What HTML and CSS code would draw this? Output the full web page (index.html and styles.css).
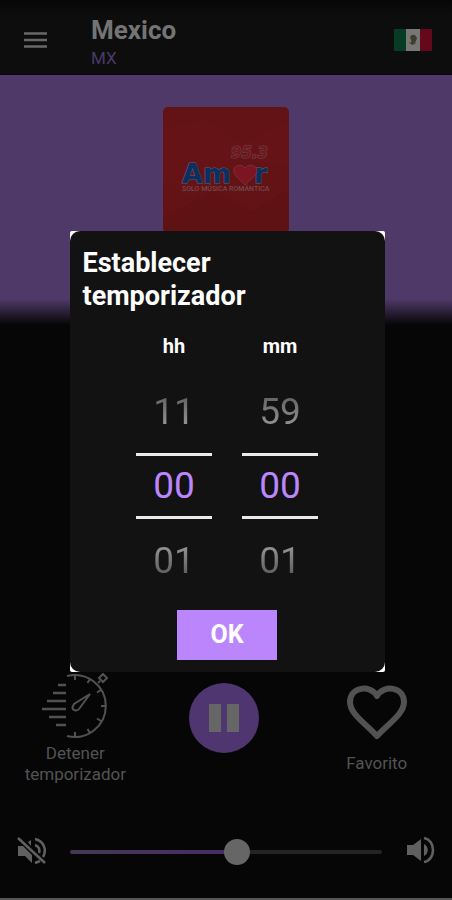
FILE: index.html
```html
<!DOCTYPE html>
<html lang="es">
<head>
<meta charset="utf-8">
<meta name="viewport" content="width=device-width, initial-scale=1">
<title>Radio Mexico</title>
<link rel="stylesheet" href="styles.css">
</head>
<body>
<div class="app">
  <header class="topbar">
    <button class="icon-button" type="button" aria-label="Menú">
      <svg width="24" height="18" viewBox="0 0 24 18"><path d="M0 2.500h23M0 9h23M0 15.500h23" stroke="currentColor" stroke-width="2.600"/></svg>
    </button>
    <div class="heading">
      <h1 class="country">Mexico</h1>
      <p class="code">MX</p>
    </div>
    <svg class="flag" width="38" height="22" viewBox="0 0 38 22" role="img" aria-label="México">
      <path fill="#063b25" d="M0 0h13v22H0z"/>
      <path fill="#777775" d="M12 0h14v22H12z"/>
      <path fill="#650819" d="M26 0h12v22H26z"/>
      <path fill="#403c32" d="M16 8q1-3 5-2l2 3-1 3-2 3q-2 1.500-4-.5l1.500-2z"/>
      <path d="M15 13q2 4 7 1" fill="none" stroke="#4c5140"/>
    </svg>
  </header>
  <main class="main">
    <section class="hero">
      <svg class="cover" width="126" height="126" viewBox="0 0 126 126" role="img" aria-label="Amor 95.3">
        <rect width="126" height="126" rx="5" fill="#631316"/>
        <path d="M0 22L42 12 80 36 126 14V60L70 50 30 92 0 74z" fill="#6a1417" opacity=".35"/>
        <path d="M0 110L50 84 90 104 126 82V121a5 5 0 0 1-5 5H5a5 5 0 0 1-5-5z" fill="#56100f" opacity=".3"/>
        <text class="freq" x="68" y="51">95.3</text>
        <text class="brand" x="19" y="76">Am</text>
        <text class="brand" x="91" y="76">r</text>
        <path d="M82 61c-3-5-13-3-11 4 1 5 7 8 11 13 4-5 12-9 12-14 0-6-9-8-12-3z" fill="#7d1422" stroke="#6f4a50" stroke-width=".6"/>
        <text class="tagline" x="19" y="84">SOLO MÚSICA ROMÁNTICA</text>
      </svg>
    </section>
    <section class="controls">
      <button class="action" type="button">
        <svg width="68" height="66" viewBox="0 0 68 66" fill="none" stroke="currentColor" stroke-width="2">
          <path d="M26 3a31 31 0 1 1 0 60"/>
          <path d="M17 12h8M12 20h13M6 28h19M1 36h24M8 44h17M15 52h10" stroke-width="2.600"/>
          <path d="M34 2v5M49 6l-2.500 4M60 17l-4 2.500M65 33h-5M60 48l-4-2.500M49 60l-2.500-4M34 64v-5"/>
          <path d="M49 21L38 36c-2 2.500-7 1.500-6.500-2L33 31z"/>
          <path d="M57 10l2-2M58 5l4-4 4 4-4 4z"/>
        </svg>
        <span>Detener temporizador</span>
      </button>
      <button class="play" type="button" aria-label="Pausa">
        <svg width="32" height="28" viewBox="0 0 32 28" fill="currentColor"><path d="M1 0h12v28H1zM19 0h12v28H19z"/></svg>
      </button>
      <button class="action" type="button">
        <svg width="60" height="64" viewBox="0 0 60 64" fill="none" stroke="currentColor" stroke-width="6" stroke-linejoin="round"><path d="M30 51C18 38 3 29 3 17 3 2 23-1 30 11 37-1 57 2 57 17c0 12-15 21-27 34z"/></svg>
        <span>Favorito</span>
      </button>
    </section>
    <section class="volume">
      <svg width="30" height="30" viewBox="0 0 30 30" fill="none" stroke="currentColor" stroke-width="2.600">
        <path d="M2 9h5l9 9v8l-7-7H2z" fill="currentColor" stroke="none"/>
        <path d="M12 5l3-2v6z" fill="currentColor" stroke="none"/>
        <path d="M2 1l27 25"/>
        <path d="M19 2c9 2 12 11 8 18M19 8c4 1 5 5 4 8M19 26l5-2"/>
      </svg>
      <input class="slider" type="range" min="0" max="100" value="54" aria-label="Volumen">
      <svg width="30" height="30" viewBox="0 0 30 30" fill="none" stroke="currentColor" stroke-width="2.600">
        <path d="M1 8h6l8-6v22l-8-6H1z" fill="currentColor" stroke="none"/>
        <path d="M18 7c5 2 5 10 0 12z" fill="currentColor" stroke="none"/>
        <path d="M18 1c12 2 12 22 0 24"/>
      </svg>
    </section>
  </main>
</div>
<div class="overlay">
  <div class="dialog-frame" role="dialog" aria-modal="true" aria-labelledby="timer-title">
    <form class="dialog">
      <h2 class="title" id="timer-title">Establecer temporizador</h2>
      <div class="pickers">
        <div class="picker">
          <label class="unit" for="hours">hh</label>
          <button class="step before" type="button">11</button>
          <input class="value" id="hours" type="text" inputmode="numeric" value="00">
          <button class="step after" type="button">01</button>
        </div>
        <div class="picker">
          <label class="unit" for="minutes">mm</label>
          <button class="step before" type="button">59</button>
          <input class="value" id="minutes" type="text" inputmode="numeric" value="00">
          <button class="step after" type="button">01</button>
        </div>
      </div>
      <button class="confirm" type="button">OK</button>
    </form>
  </div>
</div>
</body>
</html>
```
FILE: styles.css
```css
* {
  box-sizing: border-box;
}

body {
  margin: 0;
  background: #060606;
  color: #535353;
  font-family: Roboto, "Liberation Sans", sans-serif;
}

h1,
h2,
p {
  margin: 0;
}

button,
input {
  margin: 0;
  padding: 0;
  border: 0;
  background: none;
  color: inherit;
  font: inherit;
}

svg {
  display: block;
  flex: none;
}

.app {
  display: flex;
  flex-direction: column;
  min-height: 100vh;
  border-bottom: 2px solid #555;
}

.topbar {
  display: flex;
  align-items: center;
  height: 75px;
  padding: 10px 20px 4px 24px;
  background: linear-gradient(#070707, #0d0d0d 16px);
  border-bottom: 1px solid #090510;
}

.icon-button {
  width: 67px;
  color: #686868;
}

.heading {
  flex: 1;
  padding-top: 4px;
}

.country {
  color: #747474;
  font-size: 26px;
  line-height: 32px;
}

.code {
  color: #49396a;
  font-size: 17px;
  line-height: 24px;
}

.main {
  display: flex;
  flex: 1;
  flex-direction: column;
}

.hero {
  display: flex;
  justify-content: center;
  height: 250px;
  padding-top: 32px;
  background: linear-gradient(#4f3968 224px, #060606);
}

.brand {
  fill: #0b2f60;
  stroke: #5d6070;
  stroke-width: 1px;
  paint-order: stroke;
  font: 700 27px "DejaVu Sans", sans-serif;
}

.freq {
  fill: #6f1820;
  stroke: #6b4a4e;
  stroke-width: 1px;
  paint-order: stroke;
  font: italic 700 15px "DejaVu Sans", sans-serif;
}

.tagline {
  fill: #76484a;
  font: 500 7px Roboto, sans-serif;
}

.controls {
  display: grid;
  grid-template-columns: repeat(3, 1fr);
  align-items: center;
  justify-items: center;
  margin-top: auto;
}

.action {
  display: flex;
  flex-direction: column;
  align-items: center;
  gap: 4px;
  font-size: 17px;
  line-height: 21px;
}

.action svg {
  color: #525252;
}

.play {
  display: grid;
  place-items: center;
  width: 70px;
  height: 70px;
  margin: 0 4px 22px 0;
  border-radius: 50%;
  background: #4f3670;
  color: #666;
}

.volume {
  display: flex;
  align-items: center;
  gap: 24px;
  padding: 52px 16px 31px;
  color: #606060;
}

.slider {
  flex: 1;
  min-width: 0;
  height: 28px;
  appearance: none;
}

.slider::-webkit-slider-runnable-track {
  height: 4px;
  border-radius: 2px;
  background: linear-gradient(90deg, #443852, #482c66 54%, #242424 54%);
}

.slider::-webkit-slider-thumb {
  width: 26px;
  height: 26px;
  margin-top: -11px;
  border-radius: 50%;
  background: #666;
  appearance: none;
}

.overlay {
  position: fixed;
  inset: 0;
  display: grid;
  place-items: center;
  padding: 2px 0 0 2px;
}

.dialog-frame {
  width: 70%;
  border-radius: 2px;
  background: #fff;
}

.dialog {
  display: flex;
  flex-direction: column;
  align-items: center;
  padding: 16px 13px 12px;
  border-radius: 10px;
  background: #121212;
  color: #fff;
}

.title {
  align-self: stretch;
  font-size: 27px;
  line-height: 33px;
}

.pickers {
  display: flex;
  gap: 30px;
  margin: 21px 0 8px;
}

.picker {
  display: flex;
  flex-direction: column;
  align-items: center;
  width: 76px;
}

.unit {
  font-size: 20px;
  font-weight: 700;
  line-height: 24px;
}

.step,
.value {
  width: 100%;
  font-size: 37px;
  text-align: center;
}

.step {
  height: 83px;
  line-height: 83px;
  background-clip: text;
  color: transparent;
}

.before {
  margin-top: 12px;
  background-image: linear-gradient(#606060 30%, #989898 70%);
}

.after {
  background-image: linear-gradient(#989898 30%, #585858 70%);
}

.value {
  height: 66px;
  border: solid #ece8ee;
  border-width: 3px 0;
  color: #bb86fc;
}

.confirm {
  width: 100px;
  height: 50px;
  background: #bb86fc;
  font-size: 25px;
  font-weight: 700;
}
```
